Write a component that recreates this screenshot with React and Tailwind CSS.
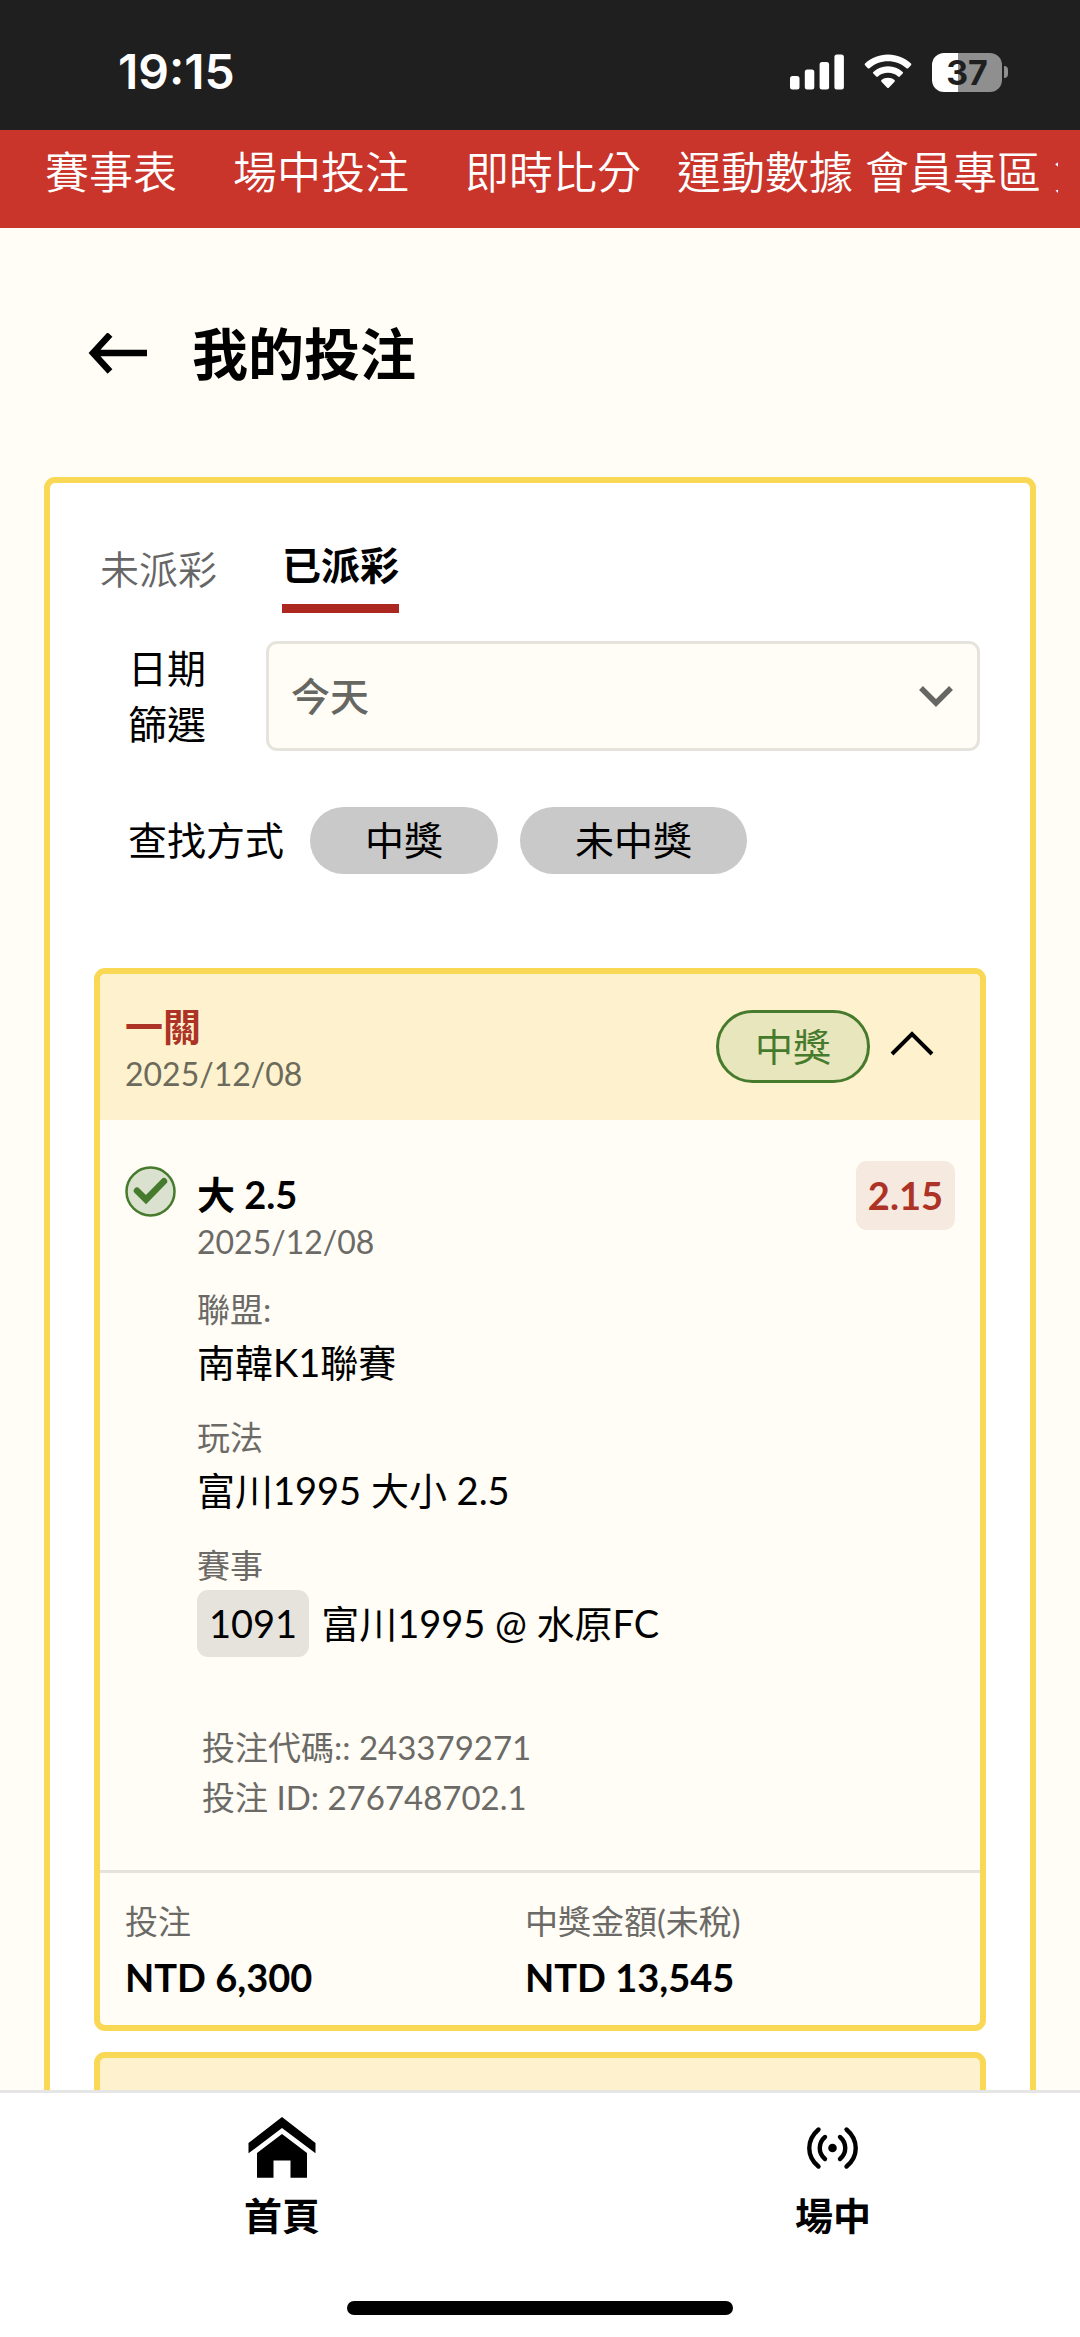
import React, { useState } from "react";

const navItems = [
  { label: "賽事表", className: "mr-14" },
  { label: "場中投注", className: "mr-14" },
  { label: "即時比分", className: "mr-9" },
  { label: "運動數據", className: "mr-3" },
  { label: "會員專區", className: "mr-3" },
  { label: "負", className: "" },
];

const ticket = {
  title: "一關",
  date: "2025/12/08",
  status: "中獎",
  pick: "大 2.5",
  odds: "2.15",
  league: "南韓K1聯賽",
  market: "富川1995 大小 2.5",
  matchNo: "1091",
  match: "富川1995 @ 水原FC",
  code: "243379271",
  id: "276748702.1",
  stake: "NTD 6,300",
  payout: "NTD 13,545",
};

function StatusBar() {
  return (
    <div className="flex shrink-0 items-center justify-between bg-[#1f1f1f] pt-[44px] pb-[30px] pl-[118px] pr-[72px] font-['Inter',sans-serif]">
      <span className="text-[48px] leading-14 font-semibold text-white">19:15</span>
      <div className="flex items-center gap-5">
        {/* Signal */}
        <svg width="54" height="36" viewBox="0 0 54 36" fill="#fff">
          <rect x="0" y="22" width="9.5" height="13.5" rx="2.5" />
          <rect x="14.8" y="15.5" width="9.5" height="20" rx="2.5" />
          <rect x="29.6" y="8" width="9.5" height="27.5" rx="2.5" />
          <rect x="44.4" y="0.5" width="9.5" height="35" rx="2.5" />
        </svg>
        {/* Wifi */}
        <svg width="48" height="36" viewBox="0 0 48 36" fill="#fff">
          <path d="M24 .5C15 .5 7 4 1 9.600q-.8.8 0 1.700l2.800 2.900q.8.8 1.700 0C10.500 9.700 17 7.200 24 7.200s13.500 2.500 18.500 7q.9.8 1.700 0l2.800-2.900q.8-.9 0-1.700C41 4 33 .5 24 .5z" />
          <path d="M24 12.200c-5.700 0-10.800 2.100-14.700 5.700q-.9.800 0 1.700l2.900 2.900q.8.800 1.700 0c2.700-2.400 6.200-3.700 10.100-3.700s7.400 1.300 10.100 3.700q.9.800 1.700 0l2.900-2.900q.9-.9 0-1.700c-3.900-3.600-9-5.700-14.700-5.700z" />
          <path d="M24 23.800c-2.500 0-4.700.8-6.500 2.300q-.9.800 0 1.700l5.700 5.900q.8.800 1.600 0l5.700-5.900q.9-.9 0-1.700c-1.800-1.500-4-2.300-6.500-2.300z" />
        </svg>
        {/* Battery */}
        <div className="flex items-center gap-0.5">
          <span className="flex h-[39px] w-[70px] items-center justify-center rounded-[12px] bg-linear-to-r from-white from-37% to-[#8f8f8f] to-37% text-[34px] font-bold text-[#1f1f1f]">
            37
          </span>
          <span className="h-3 w-1 rounded-r-full bg-[#8f8f8f]" />
        </div>
      </div>
    </div>
  );
}

function TopNav() {
  return (
    <nav className="shrink-0 bg-[#c9342b] pt-2.5 pb-6 pl-[45px] pr-[22px]">
      <div className="flex overflow-hidden whitespace-nowrap">
        {navItems.map((item) => (
          <a
            key={item.label}
            href="#"
            className={`shrink-0 text-[44px] leading-16 font-[350] text-white ${item.className}`}
          >
            {item.label}
          </a>
        ))}
      </div>
    </nav>
  );
}

function Field({ label, children }) {
  return (
    <div>
      <p className="text-[33px] leading-[50px] text-[#6b6a67]">{label}</p>
      {children}
    </div>
  );
}

function Ticket({ bet }) {
  const [open, setOpen] = useState(true);

  return (
    <article className="overflow-hidden rounded-[11px] border-6 border-[#f9d855] bg-[#fffdf5]">
      {/* Header */}
      <div className="flex items-center justify-between bg-[#fdf2cd] pt-6 pb-[26px] pl-[25px] pr-11">
        <div>
          <h2 className="text-[38px] leading-14 font-bold text-[#ac3326]">{bet.title}</h2>
          <p className="text-[32px] leading-10 text-[#6b6a5c]">{bet.date}</p>
        </div>
        <div className="flex items-center gap-[18px]">
          <span className="rounded-full border-3 border-[#467a2c] bg-[#e8e6bd] px-9 text-[38px] leading-[67px] text-[#467a2c]">
            {bet.status}
          </span>
          <button type="button" aria-label={bet.title} aria-expanded={open} onClick={() => setOpen(!open)}>
            <svg width="48" height="36" viewBox="0 0 48 36" fill="none" stroke="#000" strokeWidth="4">
              <path d="M4 26 24 6 44 26" />
            </svg>
          </button>
        </div>
      </div>

      {/* Body */}
      {open && (
        <div className="flex items-start pt-[41px] pb-12 px-[25px]">
          <svg className="mt-[5px] mr-[21px] shrink-0" width="51" height="51" viewBox="0 0 51 51" fill="none">
            <circle cx="25.500" cy="25.500" r="24" fill="#dae2cf" stroke="#467a2c" strokeWidth="2.500" />
            <path d="M12 24.800l9 8.800 18-18.400" stroke="#467a2c" strokeWidth="6.500" strokeLinecap="round" />
          </svg>
          <div className="flex-1 pt-[5px]">
            <h3 className="text-[38px] leading-14 font-bold">{bet.pick}</h3>
            <p className="text-[32px] leading-10 text-[#6b6a67]">{bet.date}</p>
            <div className="mt-[22px] flex flex-col gap-[22px]">
              <Field label="聯盟:">
                <p className="text-[38px] leading-14">{bet.league}</p>
              </Field>
              <Field label="玩法">
                <p className="text-[38px] leading-14">{bet.market}</p>
              </Field>
              <Field label="賽事">
                <p className="flex items-center gap-3 text-[38px] leading-[67px]">
                  <span className="rounded-[11px] bg-[#e6e3dd] px-3">{bet.matchNo}</span>
                  {bet.match}
                </p>
              </Field>
            </div>
            <div className="mt-[65px] pl-[5px] text-[33px] leading-[50px] text-[#6b6a67]">
              <p>投注代碼:: {bet.code}</p>
              <p>投注 ID: {bet.id}</p>
            </div>
          </div>
          <span className="rounded-[11px] bg-[#f5e9e0] px-3 text-[38px] leading-[69px] font-bold text-[#ac3326]">
            {bet.odds}
          </span>
        </div>
      )}

      {/* Amounts */}
      <dl className="grid grid-cols-2 border-t-3 border-[#e6e3dd] pt-5 pb-5 pl-[25px] pr-[55px]">
        <div>
          <dt className="text-[33px] leading-14 text-[#6b6a67]">投注</dt>
          <dd className="text-[38px] leading-14 font-bold">{bet.stake}</dd>
        </div>
        <div>
          <dt className="text-[33px] leading-14 text-[#6b6a67]">中獎金額(未稅)</dt>
          <dd className="text-[38px] leading-14 font-bold">{bet.payout}</dd>
        </div>
      </dl>
    </article>
  );
}

function BottomNav() {
  return (
    <footer className="shrink-0 border-t-3 border-[#e5e5e5] bg-white pt-6 pb-[22px]">
      <nav className="flex justify-between pl-[244px] pr-[209px] text-[38px] leading-14 font-semibold">
        <a href="#" className="flex flex-col items-center gap-[9px]">
          <svg width="68" height="61" viewBox="0 0 67 61" fill="#000">
            <path d="M0 26 33.500 0 67 26v10.300L33.500 11 0 36.300z" />
            <path d="M33.500 17 58.500 36v24.800H42V43.600H25v17.200H8.500V36z" />
          </svg>
          首頁
        </a>
        <a href="#" className="flex flex-col items-center gap-[9px]">
          <svg width="51" height="61" viewBox="0 0 51 61" fill="none" stroke="#000" strokeWidth="4.400" strokeLinecap="round">
            <path d="M11.500 12.500c-12.300 10.500-12.300 27 0 37M39.500 12.500c12.300 10.500 12.300 27 0 37" />
            <path d="M18 20c-7 6-7 16 0 22M33 20c7 6 7 16 0 22" />
            <circle cx="25.500" cy="31" r="4.300" fill="#000" stroke="none" />
          </svg>
          場中
        </a>
      </nav>
      <div className="mx-auto mt-[58px] h-[14px] w-[386px] rounded-full bg-black" />
    </footer>
  );
}

export default function App() {
  const [tab, setTab] = useState("settled");

  const activeTab = "border-b-9 border-[#ac2720] pb-[11px] font-semibold text-black";
  const idleTab = "pb-4 font-[350] text-[#666]";

  return (
    <div className="flex h-screen flex-col bg-[#fffdf5] font-['Lato','Noto_Sans_CJK_TC',sans-serif] text-black">
      <StatusBar />
      <TopNav />

      <main className="min-h-0 flex-1 overflow-y-auto px-11 pt-[98px] [scrollbar-width:none]">
        <div className="flex items-center gap-11 pl-[44px]">
          <button type="button" aria-label="我的投注">
            <svg width="60" height="42" viewBox="0 0 60 42" fill="none" stroke="#000" strokeWidth="6.500">
              <path d="M59 20H6M22 1.500 5 20l17 18.500" />
            </svg>
          </button>
          <h1 className="text-[56px] leading-14 font-bold">我的投注</h1>
        </div>

        <section className="mt-[95px] rounded-[11px] border-6 border-[#f9d855] bg-white px-11 pt-[54px] pb-11">
          {/* Tabs */}
          <div role="tablist" className="flex items-end gap-[65px] px-1.5 text-[39px] leading-14">
            <button
              type="button"
              role="tab"
              aria-selected={tab === "open"}
              onClick={() => setTab("open")}
              className={tab === "open" ? activeTab : idleTab}
            >
              未派彩
            </button>
            <button
              type="button"
              role="tab"
              aria-selected={tab === "settled"}
              onClick={() => setTab("settled")}
              className={tab === "settled" ? activeTab : idleTab}
            >
              已派彩
            </button>
          </div>

          {/* Filters */}
          <div className="mt-[27px] flex items-center gap-[60px] pl-[34px] pr-1.5">
            <label htmlFor="date" className="w-[78px] shrink-0 text-[39px] leading-14">
              日期篩選
            </label>
            <div className="relative flex-1">
              <select
                id="date"
                className="block h-[110px] w-full appearance-none rounded-[11px] border-3 border-[#e6e3dd] bg-[#fffdf5] px-[22px] text-[39px] font-medium text-[#666662]"
              >
                <option>今天</option>
              </select>
              <svg
                className="pointer-events-none absolute top-1/2 right-[26px] -translate-y-1/2"
                width="36"
                height="22"
                viewBox="0 0 36 22"
                fill="none"
                stroke="#666662"
                strokeWidth="5.500"
              >
                <path d="M3 3 18 18 33 3" />
              </svg>
            </div>
          </div>
          <div className="mt-[55px] flex items-center gap-[22px] pl-[34px] text-[39px] leading-[67px]">
            <span className="mr-1">查找方式</span>
            <button type="button" className="rounded-full bg-[#c9c9c9] px-[55px]">
              中獎
            </button>
            <button type="button" className="rounded-full bg-[#c9c9c9] px-[55px]">
              未中獎
            </button>
          </div>

          {/* Tickets */}
          <div className="mt-[94px] flex flex-col gap-[21px]">
            <Ticket bet={ticket} />
            <div className="h-[152px] rounded-[11px] border-6 border-[#f9d855] bg-[#fdf2cd]" />
          </div>
        </section>
      </main>

      <BottomNav />
    </div>
  );
}
